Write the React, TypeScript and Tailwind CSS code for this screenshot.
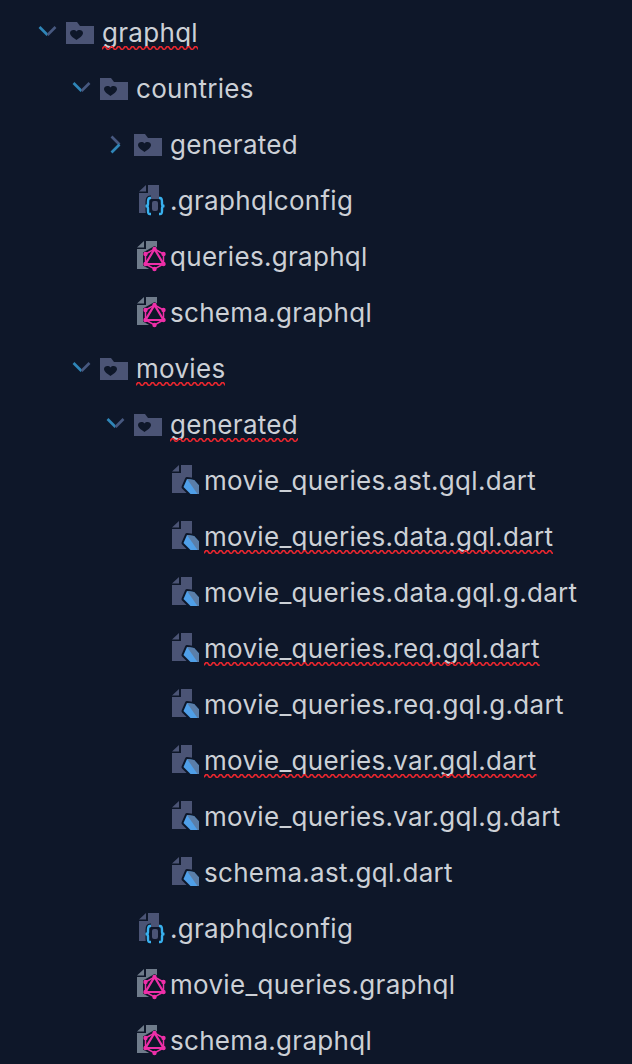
import { Fragment, useId } from 'react'

type Kind = 'folder' | 'config' | 'graphql' | 'dart'

interface Row {
  depth: number
  name: string
  kind: Kind
  open?: boolean
  squiggle?: boolean
}

const rows: Row[] = [
  { depth: 0, name: 'graphql', kind: 'folder', open: true, squiggle: true },
  { depth: 1, name: 'countries', kind: 'folder', open: true },
  { depth: 2, name: 'generated', kind: 'folder', open: false },
  { depth: 2, name: '.graphqlconfig', kind: 'config' },
  { depth: 2, name: 'queries.graphql', kind: 'graphql' },
  { depth: 2, name: 'schema.graphql', kind: 'graphql' },
  { depth: 1, name: 'movies', kind: 'folder', open: true, squiggle: true },
  { depth: 2, name: 'generated', kind: 'folder', open: true, squiggle: true },
  { depth: 3, name: 'movie_queries.ast.gql.dart', kind: 'dart' },
  { depth: 3, name: 'movie_queries.data.gql.dart', kind: 'dart', squiggle: true },
  { depth: 3, name: 'movie_queries.data.gql.g.dart', kind: 'dart' },
  { depth: 3, name: 'movie_queries.req.gql.dart', kind: 'dart', squiggle: true },
  { depth: 3, name: 'movie_queries.req.gql.g.dart', kind: 'dart' },
  { depth: 3, name: 'movie_queries.var.gql.dart', kind: 'dart', squiggle: true },
  { depth: 3, name: 'movie_queries.var.gql.g.dart', kind: 'dart' },
  { depth: 3, name: 'schema.ast.gql.dart', kind: 'dart' },
  { depth: 2, name: '.graphqlconfig', kind: 'config' },
  { depth: 2, name: 'movie_queries.graphql', kind: 'graphql' },
  { depth: 2, name: 'schema.graphql', kind: 'graphql' },
]

function Chevron({ open }: { open?: boolean }) {
  return (
    <svg width="20" height="20" viewBox="0 0 20 20" fill="none" strokeWidth="2.6">
      {open ? (
        <Fragment>
          <path d="M1.500 4 L9.500 12" stroke="#2f86b8" />
          <path d="M9.500 12 L17.500 4" stroke="#47587f" />
        </Fragment>
      ) : (
        <Fragment>
          <path d="M5.500 1.500 L13.500 9.500" stroke="#47587f" />
          <path d="M13.500 9.500 L5.500 17.500" stroke="#2f86b8" />
        </Fragment>
      )}
    </svg>
  )
}

function FolderIcon() {
  return (
    <svg width="28" height="22" viewBox="0 0 28 22">
      <path d="M0 0 H11 L14 4 H28 V22 H0 Z" fill="#4b5475" />
      <path
        d="M10.500 18 C8 16.200 4 14 4 11 C4 8 8.500 7 10.500 9.500 C12.500 7 17 8 17 11 C17 14 13 16.200 10.500 18 Z"
        fill="#0e1729"
      />
    </svg>
  )
}

function FileBase({ x, fill }: { x: number; fill: string }) {
  return (
    <path
      transform={`translate(${x} 0)`}
      d="M9 0 H20 V28 H0 V8 H9 Z M0 6.500 L7 0 V6.500 Z"
      fill={fill}
      fillRule="evenodd"
    />
  )
}

function ConfigIcon() {
  const left =
    'M17 13 H16 C14 13 14 15 14 17 V19 C14 20 13 21 11.500 21 C13 21 14 22 14 23.500 V26 C14 28 14 29 16 29 H17'
  const right =
    'M25 13 H26 C28 13 28 15 28 17 V19 C28 20 29 21 30.500 21 C29 21 28 22 28 23.500 V26 C28 28 28 29 26 29 H25'
  return (
    <svg width="34" height="32" viewBox="0 0 34 32" fill="none">
      <FileBase x={5} fill="#4b5475" />
      <path d={left} stroke="#0e1729" strokeWidth="5" />
      <path d={right} stroke="#0e1729" strokeWidth="5" />
      <rect x="15" y="14" width="12" height="14" fill="#0e1729" />
      <rect x="18" y="16" width="6" height="10" rx="2" fill="#4b5475" />
      <path d={left} stroke="#38b0ee" strokeWidth="2.400" />
      <path d={right} stroke="#38b0ee" strokeWidth="2.400" />
    </svg>
  )
}

function GraphqlIcon() {
  const dots: [number, number][] = [
    [20.5, 8],
    [29.5, 13],
    [29.5, 23],
    [20.5, 28],
    [11.5, 23],
    [11.5, 13],
  ]
  return (
    <svg width="34" height="32" viewBox="0 0 34 32" fill="none">
      <FileBase x={3} fill="#6f7c8b" />
      <path d="M20.500 5 L32 11.500 V24.500 L20.500 31 L9 24.500 V11.500 Z" fill="#0e1729" />
      <path d="M20.500 8 L29.500 13 V23 L20.500 28 L11.500 23 V13 Z" stroke="#ee2fa8" strokeWidth="1.500" />
      <path d="M20.500 8 L29.500 23 H11.500 Z" stroke="#ee2fa8" strokeWidth="2.200" />
      {dots.map(([cx, cy]) => (
        <circle key={`${cx}-${cy}`} cx={cx} cy={cy} r="2.200" fill="#ee2fa8" />
      ))}
    </svg>
  )
}

function DartIcon() {
  const shape = 'M19 14 L26 15 L31 20.500 V29 H22.500 L15.500 22 Z'
  return (
    <svg width="34" height="32" viewBox="0 0 34 32" fill="none">
      <FileBase x={4} fill="#4b5475" />
      <path d={shape} fill="#0e1729" stroke="#0e1729" strokeWidth="4" strokeLinejoin="round" />
      <path d={shape} fill="#4f9fe8" />
      <path d="M19 14 L26 15 L31 20.500 V29 H29.500 Z" fill="#5b7ea8" />
    </svg>
  )
}

function FileIcon({ kind }: { kind: Kind }) {
  if (kind === 'folder') return <FolderIcon />
  if (kind === 'config') return <ConfigIcon />
  if (kind === 'graphql') return <GraphqlIcon />
  return <DartIcon />
}

// red error underline, same wave as the editor draws it
function Squiggle() {
  const id = useId()
  return (
    <svg className="absolute bottom-[-1px] left-0 h-[4px] w-full" fill="none">
      <defs>
        <pattern id={id} width="7" height="4" patternUnits="userSpaceOnUse">
          <path d="M0 3.200 L1.750 0.800 L3.500 0.800 L5.250 3.200 L7 3.200" stroke="#e8262e" strokeWidth="1.600" />
        </pattern>
      </defs>
      <rect width="100%" height="4" fill={`url(#${id})`} />
    </svg>
  )
}

function TreeRow({ row }: { row: Row }) {
  return (
    <div className="flex h-14 items-center">
      <div className="shrink-0" style={{ width: row.depth * 34 }} />
      <div className="flex w-[66px] shrink-0 items-center pl-[38px]">
        {row.kind === 'folder' && <Chevron open={row.open} />}
      </div>
      <div className="flex w-9 shrink-0 items-center">
        <FileIcon kind={row.kind} />
      </div>
      <span className="relative inline-block whitespace-nowrap text-[26px] leading-8 tracking-[0.3px] text-[#ccd0d6]">
        {row.name}
        {row.squiggle && <Squiggle />}
      </span>
    </div>
  )
}

export default function App() {
  return (
    <div className="h-[1064px] w-[632px] overflow-hidden bg-[#0e1729] pt-[5px] font-['Inter',sans-serif]">
      {rows.map((row, i) => (
        <TreeRow key={i} row={row} />
      ))}
    </div>
  )
}
